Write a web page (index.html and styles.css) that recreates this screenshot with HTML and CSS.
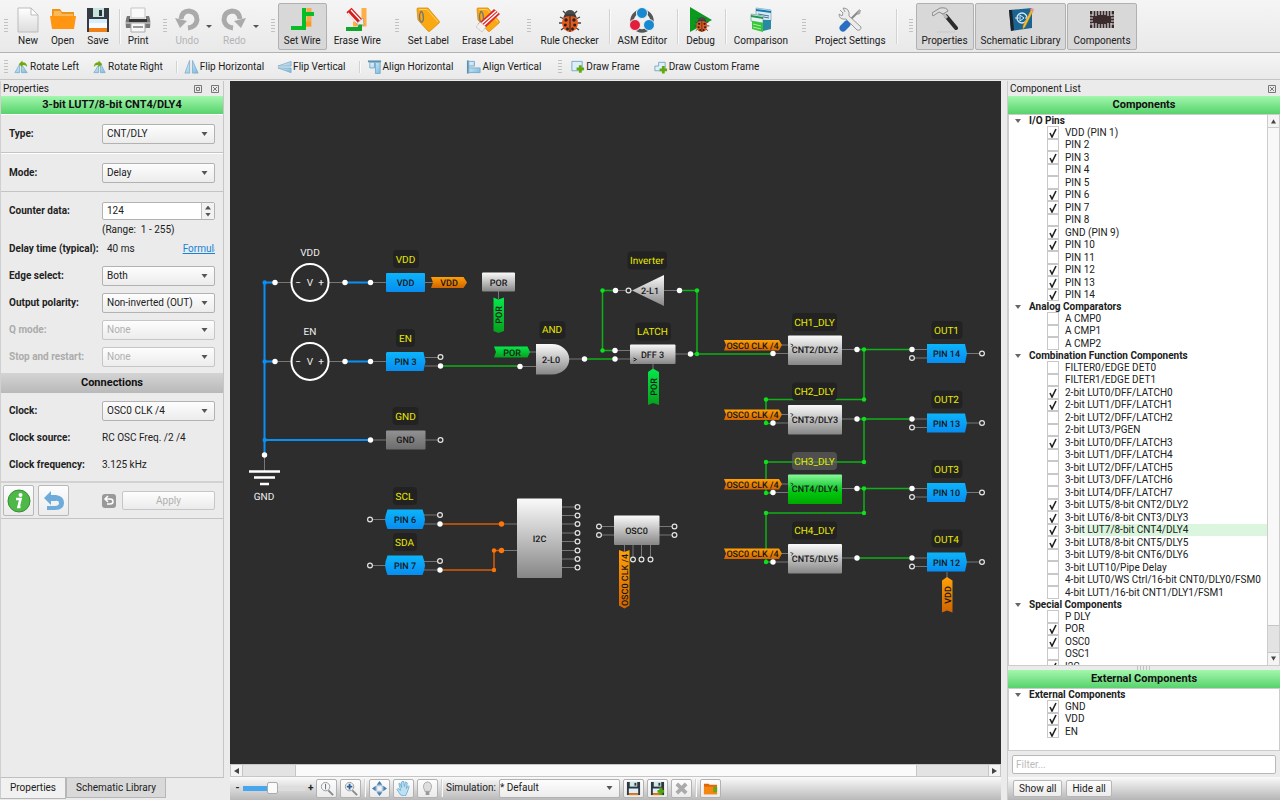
FILE: index.html
```html
<!DOCTYPE html>
<html lang="en">
<head>
<meta charset="utf-8">
<title>Schematic Designer</title>
<link rel="stylesheet" href="styles.css">
</head>
<body>
<svg class="defs" aria-hidden="true">
  <defs>
    <linearGradient id="blue" x1="0" y1="0" x2="0" y2="1"><stop offset="0" stop-color="#0cb4fa"/><stop offset="1" stop-color="#078df0"/></linearGradient>
    <linearGradient id="silver" x1="0" y1="0" x2="0" y2="1"><stop offset="0" stop-color="#fafafa"/><stop offset="1" stop-color="#868686"/></linearGradient>
    <linearGradient id="grey" x1="0" y1="0" x2="0" y2="1"><stop offset="0" stop-color="#929294"/><stop offset="1" stop-color="#6c6c6c"/></linearGradient>
    <linearGradient id="active" x1="0" y1="0" x2="0" y2="1"><stop offset="0" stop-color="#8cf79a"/><stop offset=".35" stop-color="#2fd54a"/><stop offset=".6" stop-color="#00c60e"/><stop offset="1" stop-color="#00a800"/></linearGradient>
    <linearGradient id="orange" x1="0" y1="0" x2="0" y2="1"><stop offset="0" stop-color="#ffa008"/><stop offset="1" stop-color="#cf6400"/></linearGradient>
    <linearGradient id="green" x1="0" y1="0" x2="0" y2="1"><stop offset="0" stop-color="#05e84c"/><stop offset="1" stop-color="#06a01c"/></linearGradient>
    <linearGradient id="paper" x1="0" y1="0" x2="0" y2="1"><stop offset="0" stop-color="#fff"/><stop offset="1" stop-color="#dcdcdc"/></linearGradient>
    <linearGradient id="sky" x1="0" y1="0" x2="1" y2="1"><stop offset="0" stop-color="#e4f4fc"/><stop offset="1" stop-color="#7dbce0"/></linearGradient>
    <g id="bug">
      <path d="M6 4l3 3M20 4l-3 3M3 10l4 2M23 10l-4 2M2 16h4M24 16h-4M4 23l4-3M22 23l-4-3" stroke="#444" stroke-width="1.3" fill="none"/>
      <path d="M8 7a5 4 0 0 1 10 0l1 3H7z" fill="#4a4a4a"/>
      <ellipse cx="13" cy="16" rx="8" ry="9" fill="#e8581c"/>
      <path d="M6 11q7-4 14 0l-2-4H8z" fill="#3c3c3c"/>
      <path d="M13 9v16" stroke="#333" stroke-width="1.2"/>
      <g fill="#222"><circle cx="9" cy="13" r="1.7"/><circle cx="17" cy="13" r="1.7"/><circle cx="8.300" cy="18" r="1.500"/><circle cx="17.700" cy="18" r="1.500"/><circle cx="10.500" cy="22" r="1.400"/><circle cx="15.500" cy="22" r="1.400"/></g>
    </g>
    <g id="tag">
      <path d="M2 2q0-1 1-1h10l11 13q1 1 0 2l-9 8q-1 1-2 0L3 13z" fill="#fba912" stroke="#d98a0c" stroke-width=".8"/>
      <path d="M4 2.500h8l11 12.500" stroke="#ffd25e" fill="none"/>
      <path d="M6 4c-3 5-1 12 1 11s2-9-1-11" fill="none" stroke="#777" stroke-width="1.400"/>
    </g>
    <g id="eraser"><path d="M19 2l6 5L9 22l-6-5z" fill="#e12a2a"/><path d="M21 4L5 18M23 5.500L7 20" stroke="#fff" stroke-width="1.400"/><path d="M5 15l6 5-4 5-6-5z" fill="#f3efee" stroke="#bbb" stroke-width=".6"/></g>
    <g id="lens"><circle cx="7" cy="6" r="4.500" fill="#f3f7fb" stroke="#999" stroke-width="1"/><path d="M10 10l5 5" stroke="#888" stroke-width="2"/></g>
    <g id="disk"><path d="M1 1h14v14H1z" fill="#2e3640"/><path d="M4 1h8v5H4z" fill="#cdeae8"/><path d="M9 2h2v3H9z" fill="#30363c"/><path d="M3 8h10v5H3z" fill="#dceefb"/><path d="M3 13h10v2H3z" fill="#ef7b10"/></g>
  </defs>
</svg>

<header>
  <nav class="toolbar main" aria-label="Main">
    <i class="grip first"></i>
    <button><svg viewBox="0 0 26 26"><path d="M3 1h13l7 7v17H3z" fill="url(#paper)" stroke="#bbb"/><path d="M16 1v7h7z" fill="#fff" stroke="#bbb"/></svg>New</button>
    <button><svg viewBox="0 0 26 26"><path d="M2 2h8l2 3h12v10H2z" fill="#f09418"/><path d="M4 4h6l2 3h11v7H3z" fill="#fbb95c"/><path d="M0 9h26l-2 13H2z" fill="#ff9510"/></svg>Open</button>
    <button><svg viewBox="0 0 26 26"><path d="M2 1h22v24H2z" fill="#343b43"/><path d="M8 1h11v9H8z" fill="#c7e3e0"/><path d="M14 3h3v6h-3z" fill="#2c3439"/><path d="M4 12h18v9H4z" fill="#d7eefd"/><path d="M4 16h18v5H4z" fill="#f7fbff"/><path d="M4 21h18v4H4z" fill="#f08016"/></svg>Save</button>
    <i class="sep"></i>
    <button><svg viewBox="0 0 26 26"><path d="M6 1h14v10H6z" fill="#fafafa" stroke="#c5c5c5"/><path d="M2 9h3v3h16V9h3q2 4 1 12H1Q0 13 2 9z" fill="#777"/><path d="M4 12h18v3H4z" fill="#353535"/><path d="M1 15h24v2H1z" fill="#aaa"/><path d="M6 16h14v9H6z" fill="#f7f7f7" stroke="#aaa"/><path d="M8 20h10" stroke="#999" stroke-width="2"/></svg>Print</button>
    <i class="grip"></i>
    <button disabled><svg viewBox="0 0 26 26"><path d="M7 12q1-8 8-8 8 1 8 9-1 7-9 8" fill="none" stroke="#aaa" stroke-width="5"/><path d="M1 11l12 3-7 7z" fill="#aaa"/></svg>Undo</button><i class="caret"></i>
    <button disabled><svg viewBox="0 0 26 26"><path d="M19 12q-1-8-8-8-8 1-8 9 1 7 9 8" fill="none" stroke="#aaa" stroke-width="5"/><path d="M25 11l-12 3 7 7z" fill="#aaa"/></svg>Redo</button><i class="caret"></i>
    <i class="grip"></i>
    <button class="on"><svg viewBox="0 0 26 26"><path d="M20 1v16h-7" fill="none" stroke="#f9a94a" stroke-width="5"/><path d="M13 17h9" stroke="#ff9820" stroke-width="5"/><path d="M15 1v20H2M15 7h10" fill="none" stroke="#08bd28" stroke-width="4"/></svg>Set Wire</button>
    <button><svg viewBox="0 0 26 26"><path d="M20 1v16H9" fill="none" stroke="#ffae48" stroke-width="5"/><path d="M16 17v5H2" fill="none" stroke="#10a52c" stroke-width="4"/><path d="M5 3l11 12" stroke="#d91e1e" stroke-width="7"/><path d="M4 6l11 12M7 3l11 12" stroke="#fff" stroke-width="1.200"/><path d="M12 17l7-6 1 7z" fill="#eee" stroke="#888" stroke-width=".5"/></svg>Erase Wire</button>
    <i class="grip"></i>
    <button><svg viewBox="0 0 26 26"><use href="#tag"/></svg>Set Label</button>
    <button><svg viewBox="0 0 26 26"><use href="#tag"/><use href="#eraser"/></svg>Erase Label</button>
    <i class="grip"></i>
    <button><svg viewBox="0 0 26 26"><use href="#bug"/></svg>Rule Checker</button>
    <i class="sep"></i>
    <button><svg viewBox="0 0 26 26"><circle cx="13" cy="14" r="10" fill="none" stroke="#555" stroke-width="3.500"/><g stroke="#f3f3f3"><circle cx="13" cy="6" r="5.500" fill="#1689d1"/><circle cx="6" cy="18" r="5.500" fill="#e11e3c"/><circle cx="20" cy="18" r="5.500" fill="#1689d1"/></g></svg>ASM Editor</button>
    <i class="sep"></i>
    <button><svg viewBox="0 0 26 26"><path d="M3 0l22 13L3 25z" fill="#0b9a1e"/><use href="#bug" transform="translate(6 8) scale(.68)"/></svg>Debug</button>
    <i class="sep"></i>
    <button><svg viewBox="0 0 26 26"><path d="M8 1l15 2v11L8 12z" fill="#d6eaf6" stroke="#93b8cc"/><path d="M8 2l15 2v2L8 4z" fill="#1479aa"/><path d="M10 7l11 2M10 9l11 2" stroke="#487187"/><path d="M3 7l12 2v7L3 14z" fill="#e5f5ee" stroke="#8ba"/><path d="M3 8l12 2v2L3 10z" fill="#22935c"/><path d="M4 14l11 2v9L4 22z" fill="#37c53c"/><path d="M15 13h8v9l-8 2z" fill="#2789a4"/><path d="M5 17l8 2M5 20l8 2" stroke="#b1ef9f"/></svg>Comparison</button>
    <i class="grip"></i>
    <button><svg viewBox="0 0 26 26"><path d="M23 3L9 17" stroke="#888" stroke-width="2"/><path d="M21 3l3 0-1 4-3 1z" fill="#aaa"/><path d="M10 17L6 21" stroke="#286fc2" stroke-width="7" stroke-linecap="round"/><path d="M3 3l3 3-1 3-3-2q0 6 7 5l11 11q4 1 4-3L12 9q1-8-6-8l2 4" fill="#ececec" stroke="#999"/></svg>Project Settings</button>
    <i class="sep"></i>
    <i class="grip far"></i>
    <button class="on"><svg viewBox="0 0 26 26"><path d="M14 9l10 12" stroke="#2c2c2c" stroke-width="4" stroke-linecap="round"/><path d="M9 4l6 7" stroke="#bbb" stroke-width="3"/><path d="M1 9L0 6 8 1q7-1 8 3l-5 3-4-2z" fill="#ddd" stroke="#777" stroke-width=".8"/><path d="M5 25h18" stroke="#c7c7c7"/></svg>Properties</button>
    <button class="on"><svg viewBox="0 0 26 26"><path d="M1 3l23-2v20L3 24z" fill="#1b6491"/><path d="M1 3l3 0 2 20-3 1z" fill="#1c2228"/><circle cx="14" cy="11" r="5" fill="none" stroke="#d4eaf6" stroke-width="1.300"/><path d="M7 11h4M17 11h4M12 8v6l4-3z" stroke="#d4eaf6" fill="none"/><path d="M23 3l2 1-8 16-2 2 0-3z" fill="#f6c02c" stroke="#c08810" stroke-width=".5"/><path d="M22 3l1-2 3 1-1 3z" fill="#f18f96"/></svg>Schematic Library</button>
    <button class="on"><svg viewBox="0 0 26 26"><path d="M1 4h24v17H1z" fill="#3b2b2c"/><path d="M4 4v5M7 4v5M10 4v4M13 4v4M16 4v4M19 4v5M22 4v5M4 16v5M7 16v5M10 17v4M13 17v4M16 17v4M19 16v5M22 16v5M1 8h3M1 11h3M1 14h3M1 17h3M22 8h3M22 11h3M22 14h3M22 17h3" stroke="#ddd" stroke-width="1.200"/></svg>Components</button>
  </nav>
  <nav class="toolbar edit" aria-label="Edit">
    <i class="grip first"></i>
    <button><svg viewBox="0 0 16 14"><path d="M1 13l5-9v9zM8 4l6 9H8z" fill="url(#sky)" stroke="#78aac8" stroke-width=".8"/><path d="M5 4l4-4v2q5 0 5 5Q12 4 9 5v2z" fill="#72a80e"/></svg>Rotate Left</button>
    <button><svg viewBox="0 0 16 14"><path d="M2 13l5-8v8zM9 3l5 10H9z" fill="url(#sky)" stroke="#78aac8" stroke-width=".8"/><path d="M11 4L7 0v2Q2 2 2 7q2-3 5-2v2z" fill="#72a80e"/></svg>Rotate Right</button>
    <i class="sep"></i>
    <button><svg viewBox="0 0 16 14"><path d="M1 13.500L6 0v13.500zM9 0l6 13.500H9z" fill="url(#sky)" stroke="#78aac8" stroke-width=".8"/></svg>Flip Horizontal</button>
    <button><svg viewBox="0 0 16 14"><path d="M15 1v5H1zM1 8h14v5z" fill="url(#sky)" stroke="#78aac8" stroke-width=".8"/></svg>Flip Vertical</button>
    <i class="sep"></i>
    <button><svg viewBox="0 0 16 14"><path d="M1 1h14" stroke="#5890b0" stroke-width="2"/><path d="M3 2h5v6H3zM9 2h5v12H9z" fill="url(#sky)" stroke="#78aac8"/></svg>Align Horizontal</button>
    <button><svg viewBox="0 0 16 14"><path d="M2 0v14" stroke="#5890b0" stroke-width="2"/><path d="M3 1h6v5H3zM3 8h12v5H3z" fill="url(#sky)" stroke="#78aac8"/></svg>Align Vertical</button>
    <i class="grip"></i>
    <button><svg viewBox="0 0 16 14"><path d="M2 1h11v10H2z" fill="#ddeffa" stroke="#78aac8"/><path d="M7 9h8M11 5v8" stroke="#64a810" stroke-width="3"/></svg>Draw Frame</button>
    <button><svg viewBox="0 0 16 14"><path d="M6 2h7v9H2V6h4z" fill="#ddeffa" stroke="#78aac8"/><path d="M7 10h8M11 6v8" stroke="#64a810" stroke-width="3"/></svg>Draw Custom Frame</button>
  </nav>
</header>

<main>
  <aside class="left">
    <div class="dock">
      <div class="docktitle"><span>Properties</span><button aria-label="Float"><svg viewBox="0 0 8 8"><path d="M.5.5h7v7h-7zM2.500 2.500h3v3h-3z"/></svg></button><button aria-label="Close"><svg viewBox="0 0 8 8"><path d="M.5.5h7v7h-7zM2 2l4 4M6 2l-4 4"/></svg></button></div>
      <h2 class="band">3-bit LUT7/8-bit CNT4/DLY4</h2>
      <div class="fields solo"><label for="type">Type:</label><select id="type"><option>CNT/DLY</option></select></div>
      <div class="fields solo"><label for="mode">Mode:</label><select id="mode"><option>Delay</option></select></div>
      <div class="fields counter">
        <label for="count">Counter data:</label>
        <div class="spin"><input id="count" type="text" value="124"><div><button aria-label="Increase" class="up"></button><button aria-label="Decrease" class="down"></button></div></div>
        <span class="range">(Range:&nbsp; 1 - 255)</span>
        <b>Delay time (typical):</b><div class="time"><span>40 ms</span><a href="#formula">Formula</a></div>
        <label for="edge">Edge select:</label><select id="edge"><option>Both</option></select>
        <label for="polarity">Output polarity:</label><select id="polarity"><option>Non-inverted (OUT)</option></select>
        <label for="qmode" class="off">Q mode:</label><select id="qmode" disabled><option>None</option></select>
        <label for="stop" class="off">Stop and restart:</label><select id="stop" disabled><option>None</option></select>
      </div>
      <h2 class="band plain">Connections</h2>
      <div class="fields links">
        <label for="clock">Clock:</label><select id="clock"><option>OSC0 CLK /4</option></select>
        <b>Clock source:</b><span>RC OSC Freq. /2 /4</span>
        <b>Clock frequency:</b><span>3.125 kHz</span>
      </div>
      <div class="actions">
        <button class="big" aria-label="Information"><svg viewBox="0 0 24 24"><circle cx="12" cy="12" r="11" fill="#4eb848" stroke="#378d35"/><circle cx="13.500" cy="6" r="2" fill="#fff"/><path d="M9 10h4.500l-2 8h2" fill="none" stroke="#fff" stroke-width="2.600"/></svg></button>
        <button class="big" aria-label="Undo change"><svg viewBox="0 0 24 24"><path d="M2 9l7-7v4h5q8 1 8 8t-9 7H5v-4h8q4 0 4-3t-4-2H9v4z" fill="#6cabda"/></svg></button>
        <button class="mini" aria-label="Reset" disabled><svg viewBox="0 0 14 14"><path d="M3 5h5q3 0 3 2.500T8 10H5M6 2L3 5l3 3" fill="none" stroke="#fff" stroke-width="1.500"/></svg></button>
        <button class="apply" disabled>Apply</button>
      </div>
    </div>
    <div class="tabs"><button class="current">Properties</button><button>Schematic Library</button></div>
  </aside>

  <section class="center">
    <div class="canvas">
    <svg viewBox="230 81 771 683" role="img" aria-label="Schematic">
      <g class="stub">
        <path d="M275 282.500h16M329 282.500h16M370 282.500h16M425 282.500h8M275 361.500h16M329 361.500h16M370 361.500h16M425 357.500h15M425 366h15M370 440h16M425 440h15M264.500 455v16M498.500 291v8M529 352h8M520 366.500h16M569 359h16M628 290.500h4M615 290.500h12M664 290.500h16M615 350.500h15M615 359h15M675 354h16M653 364v8"/>
        <path d="M370 519.500h16M424 515h16M424 524h16M370 565.500h16M424 561.500h16M424 570h16M502 524h15M502 550.500h15M562 507h15M562 515.500h15M562 524h15M562 533h15M562 541.500h15M562 550.500h15M562 559h15M562 567.500h15M599 526.500h75M599 535h75M624.500 545v8M633 545v14M641.500 545v14M650.500 545v14M947 572v8"/>
      </g>
      <g class="wire bl"><path d="M265 282.500h10M345 282.500h25M265 361.500h10M345 361.500h25M265 440h105M264.500 282v173"/></g>
      <g class="wire gr"><path d="M440 366h80M584 359h31M615 290.500h-12.500v60h12.500M680 290.500h17v63.500M691 354h82"/></g>
      <g class="wire gr"><path d="M857 349.500h55M864 349.500v50H766v24h7M857 419h55M864 419v43H766v31h7M857 488.500h55M864 488.500v24.500H766v49h7M857 558h55"/></g>
      <g class="wire or"><path d="M440 524h62M440 570h54v-19.500h8"/></g>

      <g class="src"><circle cx="310" cy="282.500" r="18.500"/><circle cx="310" cy="361.500" r="18.500"/></g>
      <path d="M249 471.500h31M254 477.500h21M260 484h9" stroke="#fff" stroke-width="2.500"/>
      <g class="t light"><text x="310" y="256">VDD</text><text x="310" y="335">EN</text><text x="264" y="500">GND</text><text x="310" y="286">V</text><text x="298" y="286">−</text><text x="321" y="286">+</text><text x="310" y="365">V</text><text x="298" y="365">−</text><text x="321" y="365">+</text></g>

      <g fill="url(#blue)"><rect x="386" y="273" width="39" height="19" rx="1"/><path d="M387 352h36.500l2 9.500-2 9.500H386v-18z"/><path d="M387.500 509.500H422.500q2 5 2.500 10-.5 5-2.500 9.500H387.500q-2-5-2.500-9.500.5-5 2.500-10z"/><path d="M387.500 555.500H422.500q2 5 2.500 10-.5 5-2.500 9.500H387.500q-2-5-2.500-9.500.5-5 2.500-10z"/></g>
      <rect x="386" y="430.500" width="39.500" height="19" rx="1" fill="url(#grey)"/>
      <g fill="url(#silver)"><rect x="482" y="272.500" width="33" height="19" rx="1"/><path d="M536 344h16a17 15 0 0 1 0 30.500H536z"/><path d="M664 275v31l-32-15.500z"/><rect x="630" y="344.500" width="45.500" height="19.500" rx="1"/><rect x="517" y="498.500" width="45" height="79.500" rx="1"/><rect x="614" y="515.500" width="45.500" height="29.500" rx="1"/></g>
      <g fill="url(#orange)"><path d="M431 277h32.500l3.500 5.500-3.500 5.500H431l2-5.500z"/><path d="M619 550l5.500 2 5-2v55.500l-5 3-5.500-3z"/><path d="M942 612.500V580.500l5-3.500 5.500 3.500v32l-5.500-2z"/></g>
      <g fill="url(#green)"><path d="M493.500 297.500l5 2 5.500-2V331l-5.500 2-5-2z"/><path d="M494 346.500h33.500l2.500 5.500-2.500 5.500H494l2-5.500z"/><path d="M648 405v-33l5-3.500 6 3.500v33l-6-2z"/></g>

      <g class="tag"><rect x="393" y="250" width="26" height="18" rx="4"/><rect x="396" y="329" width="19" height="18" rx="4"/><rect x="392.500" y="407" width="26" height="18" rx="4"/><rect x="393" y="487" width="24" height="18" rx="4"/><rect x="393" y="533" width="24" height="18" rx="4"/><rect x="539.500" y="321" width="26" height="18" rx="4"/><rect x="627.500" y="251.500" width="39.500" height="18" rx="4"/><rect x="635" y="322.500" width="36" height="18" rx="4"/></g>
      <g class="t name"><text x="405.500" y="262.500">VDD</text><text x="405.500" y="341.500">EN</text><text x="405.500" y="419.500">GND</text><text x="404.500" y="499.500">SCL</text><text x="404.500" y="545.500">SDA</text><text x="552" y="333">AND</text><text x="647" y="264">Inverter</text><text x="652.500" y="335">LATCH</text></g>

      <g class="t part"><text x="405.500" y="285.500">VDD</text><text x="449" y="286">VDD</text><text x="405.500" y="364.500">PIN 3</text><text x="405.500" y="443">GND</text><text x="498.500" y="285.500">POR</text><text x="512" y="355.500">POR</text><text x="551" y="362.500">2-L0</text><text x="650" y="294">2-L1</text><text x="652.500" y="357.500">DFF 3</text><text x="405" y="522.500">PIN 6</text><text x="405" y="568.500">PIN 7</text><text x="539.500" y="541.500">I2C</text><text x="636.500" y="534">OSC0</text>
        <text transform="translate(502 315) rotate(-90)">POR</text><text transform="translate(656.500 387) rotate(-90)">POR</text><text transform="translate(628 580) rotate(-90)">OSC0 CLK /4</text><text transform="translate(950.500 595) rotate(-90)">VDD</text></g>
      <path d="M633.500 358l3 1.500-3 1.500" fill="none" stroke="#222"/>

      <defs>
        <g id="delay"><path class="stub" d="M781 345h7M773 353.500h15M842 349.500h15"/><rect x="788" y="335.500" width="54" height="29.500" rx="1"/><path d="M790.500 344l2.500 1-1.500 2" fill="none" stroke="#222" stroke-width=".8"/><path d="M724 340h55l3 5-3 5.500h-55l2-5.500z" fill="url(#orange)"/><circle class="dot" cx="773" cy="353.500" r="2.700"/><circle class="dot" cx="857" cy="349.500" r="2.700"/></g>
        <g id="outpin"><path class="stub" d="M912 349.500h15M912 358h15M966 353.500h16"/><path d="M927 344h38l2 9.500-2 9.500h-38z" fill="url(#blue)"/><rect class="lab" x="931.500" y="321" width="31" height="18" rx="4"/><circle class="dot" cx="912" cy="349.500" r="2.700"/><circle class="ring" cx="912" cy="358" r="2.400"/><circle class="ring" cx="982" cy="353.500" r="2.400"/></g>
      </defs>
      <g fill="url(#silver)"><use href="#delay"/><use href="#delay" y="69.500"/><use href="#delay" y="139" fill="url(#active)"/><use href="#delay" y="208.500"/></g>
      <use href="#outpin"/><use href="#outpin" y="69.500"/><use href="#outpin" y="139"/><use href="#outpin" y="208.500"/>
      <g class="tag"><rect x="792" y="313" width="45" height="18" rx="4"/><rect x="792" y="382.500" width="45" height="18" rx="4"/><rect x="792" y="452" width="45" height="18" rx="4" class="sel"/><rect x="792" y="521.500" width="45" height="18" rx="4"/></g>
      <g class="t name"><text x="814.500" y="325.500">CH1_DLY</text><text x="814.500" y="395">CH2_DLY</text><text x="814.500" y="464.500">CH3_DLY</text><text x="814.500" y="534">CH4_DLY</text><text x="946.500" y="333.500">OUT1</text><text x="946.500" y="403">OUT2</text><text x="946.500" y="473">OUT3</text><text x="946.500" y="542.500">OUT4</text></g>
      <g class="t part"><text x="815" y="353">CNT2/DLY2</text><text x="815" y="422.500">CNT3/DLY3</text><text x="815" y="492">CNT4/DLY4</text><text x="815" y="561.500">CNT5/DLY5</text><text x="752.500" y="348.500">OSC0 CLK /4</text><text x="752.500" y="418">OSC0 CLK /4</text><text x="752.500" y="487.500">OSC0 CLK /4</text><text x="752.500" y="557">OSC0 CLK /4</text><text x="946.500" y="357">PIN 14</text><text x="946.500" y="426.500">PIN 13</text><text x="946.500" y="496">PIN 10</text><text x="946.500" y="565.500">PIN 12</text></g>

      <g fill="#0a8ff5"><circle cx="264.700" cy="282.500" r="2.200"/><circle cx="264.700" cy="361.500" r="2.200"/><circle cx="264.700" cy="440" r="2.200"/></g>
      <g fill="#0fe01b"><circle cx="602.500" cy="290.500" r="2.200"/><circle cx="602.500" cy="350.500" r="2.200"/><circle cx="697" cy="290.500" r="2.200"/><circle cx="697" cy="354" r="2.200"/><circle cx="864" cy="349.500" r="2.200"/><circle cx="864" cy="399.500" r="2.200"/><circle cx="766" cy="399.500" r="2.200"/><circle cx="766" cy="423" r="2.200"/><circle cx="864" cy="419" r="2.200"/><circle cx="864" cy="462" r="2.200"/><circle cx="766" cy="462" r="2.200"/><circle cx="766" cy="493" r="2.200"/><circle cx="864" cy="488.500" r="2.200"/><circle cx="864" cy="513" r="2.200"/><circle cx="766" cy="513" r="2.200"/><circle cx="766" cy="562" r="2.200"/></g>
      <g fill="#ff7508"><circle cx="501.500" cy="524" r="2.700"/><circle cx="501.500" cy="550.500" r="2.700"/><circle cx="494" cy="550.500" r="2.200"/><circle cx="494" cy="570" r="2.200"/></g>
      <g fill="#fff"><circle cx="275" cy="282.500" r="2.700"/><circle cx="345" cy="282.500" r="2.700"/><circle cx="370.500" cy="282.500" r="2.700"/><circle cx="275" cy="361.500" r="2.700"/><circle cx="345" cy="361.500" r="2.700"/><circle cx="370.500" cy="361.500" r="2.700"/><circle cx="370.500" cy="440" r="2.700"/><circle cx="264.500" cy="455" r="2.700"/><circle cx="440.500" cy="366" r="2.700"/><circle cx="520" cy="366.500" r="2.700"/><circle cx="584.500" cy="359" r="2.700"/><circle cx="615" cy="359" r="2.700"/><circle cx="615" cy="350.500" r="2.700"/><circle cx="615.500" cy="290.500" r="2.700"/><circle cx="679.500" cy="290.500" r="2.700"/><circle cx="690.500" cy="354" r="2.700"/><circle cx="440" cy="524" r="2.700"/><circle cx="440" cy="570" r="2.700"/></g>
      <g class="ring"><circle cx="440.500" cy="357" r="2.400"/><circle cx="440.500" cy="440" r="2.400"/><circle cx="628.500" cy="290.500" r="2.400"/><circle cx="370" cy="519.500" r="2.400"/><circle cx="370" cy="565.500" r="2.400"/><circle cx="440" cy="515" r="2.400"/><circle cx="440" cy="561" r="2.400"/><circle cx="577.500" cy="507" r="2.400"/><circle cx="577.500" cy="515.500" r="2.400"/><circle cx="577.500" cy="524" r="2.400"/><circle cx="577.500" cy="533" r="2.400"/><circle cx="577.500" cy="541.500" r="2.400"/><circle cx="577.500" cy="550.500" r="2.400"/><circle cx="577.500" cy="559" r="2.400"/><circle cx="577.500" cy="567.500" r="2.400"/><circle cx="599" cy="526.500" r="2.400"/><circle cx="599" cy="535" r="2.400"/><circle cx="674.500" cy="526.500" r="2.400"/><circle cx="674.500" cy="535" r="2.400"/><circle cx="633" cy="559.500" r="2.400"/><circle cx="641.500" cy="559.500" r="2.400"/><circle cx="650.500" cy="559.500" r="2.400"/></g>
    </svg>
    </div>
    <div class="hscroll"><i class="arrow prev"></i><i class="track"></i><i class="thumb"></i><i class="track tail"></i><i class="arrow next"></i></div>
    <div class="status">
      <button class="step" aria-label="Zoom out">-</button>
      <input type="range" aria-label="Zoom" min="0" max="100" value="48">
      <button class="step" aria-label="Zoom in">+</button>
      <button class="tool" aria-label="Actual size"><svg viewBox="0 0 16 16"><use href="#lens"/><path d="M7 3v6" stroke="#666"/></svg></button>
      <button class="tool" aria-label="Zoom area"><svg viewBox="0 0 16 16"><use href="#lens"/><path d="M4 6h6M7 3v6" stroke="#2c5f9b" stroke-width="2"/></svg></button>
      <i class="sep"></i>
      <button class="tool" aria-label="Fit"><svg viewBox="0 0 16 16"><path d="M8 0l3 4H5zM8 16l3-4H5zM0 8l4-3v6zM16 8l-4-3v6z" fill="#477daf"/><path d="M5 5h6v6H5z" fill="#eef4fa" stroke="#9ab3c9"/></svg></button>
      <button class="tool" aria-label="Pan"><svg viewBox="0 0 16 16"><path d="M5 15L1 9l1-1 3 2L3 3l1-1 2 5V1l2-1 1 6 1-5 2 1-1 6 2-3 1 1-2 6-2 4z" fill="#bfe0f3" stroke="#5aa5cc" stroke-width=".8"/></svg></button>
      <button class="tool" aria-label="Highlight"><svg viewBox="0 0 16 16"><path d="M5 10Q3 7 4 4t4-3 4 3-1 6v1H5z" fill="#dedede" stroke="#aaa"/><path d="M6 11h4v4H6z" fill="#999"/></svg></button>
      <i class="sep"></i>
      <label for="sim">Simulation:</label>
      <select id="sim"><option>* Default</option></select>
      <button class="tool" aria-label="Save"><svg viewBox="0 0 16 16"><use href="#disk"/></svg></button>
      <button class="tool" aria-label="Save as"><svg viewBox="0 0 16 16"><use href="#disk"/><path d="M8 11h7M11.500 7v8" stroke="#53a30c" stroke-width="3"/></svg></button>
      <button class="tool" aria-label="Delete"><svg viewBox="0 0 16 16"><path d="M3 3l10 10M13 3L3 13" stroke="#aaa" stroke-width="4"/></svg></button>
      <i class="sep"></i>
      <button class="tool" aria-label="Open folder"><svg viewBox="0 0 16 16"><path d="M1 3h5l1 1h8v10H1z" fill="#dd6708"/><path d="M1 6h14v8H1z" fill="#f48612"/><path d="M11 6h4v6h-4z" fill="#65a51b"/></svg></button>
    </div>
  </section>

  <aside class="right">
    <div class="docktitle"><span>Component List</span><button aria-label="Close"><svg viewBox="0 0 8 8"><path d="M.5.5h7v7h-7zM2 2l4 4M6 2l-4 4"/></svg></button></div>
    <h2 class="band">Components</h2>
    <div class="listbox">
      <div class="tree">
        <h3>I/O Pins</h3>
        <ul>
          <li><label><input type="checkbox" checked>VDD (PIN 1)</label></li>
          <li><label><input type="checkbox">PIN 2</label></li>
          <li><label><input type="checkbox" checked>PIN 3</label></li>
          <li><label><input type="checkbox">PIN 4</label></li>
          <li><label><input type="checkbox">PIN 5</label></li>
          <li><label><input type="checkbox" checked>PIN 6</label></li>
          <li><label><input type="checkbox" checked>PIN 7</label></li>
          <li><label><input type="checkbox">PIN 8</label></li>
          <li><label><input type="checkbox" checked>GND (PIN 9)</label></li>
          <li><label><input type="checkbox" checked>PIN 10</label></li>
          <li><label><input type="checkbox">PIN 11</label></li>
          <li><label><input type="checkbox" checked>PIN 12</label></li>
          <li><label><input type="checkbox" checked>PIN 13</label></li>
          <li><label><input type="checkbox" checked>PIN 14</label></li>
        </ul>
        <h3>Analog Comparators</h3>
        <ul>
          <li><label><input type="checkbox">A CMP0</label></li>
          <li><label><input type="checkbox">A CMP1</label></li>
          <li><label><input type="checkbox">A CMP2</label></li>
        </ul>
        <h3>Combination Function Components</h3>
        <ul>
          <li><label><input type="checkbox">FILTER0/EDGE DET0</label></li>
          <li><label><input type="checkbox">FILTER1/EDGE DET1</label></li>
          <li><label><input type="checkbox" checked>2-bit LUT0/DFF/LATCH0</label></li>
          <li><label><input type="checkbox" checked>2-bit LUT1/DFF/LATCH1</label></li>
          <li><label><input type="checkbox">2-bit LUT2/DFF/LATCH2</label></li>
          <li><label><input type="checkbox">2-bit LUT3/PGEN</label></li>
          <li><label><input type="checkbox" checked>3-bit LUT0/DFF/LATCH3</label></li>
          <li><label><input type="checkbox">3-bit LUT1/DFF/LATCH4</label></li>
          <li><label><input type="checkbox">3-bit LUT2/DFF/LATCH5</label></li>
          <li><label><input type="checkbox">3-bit LUT3/DFF/LATCH6</label></li>
          <li><label><input type="checkbox">3-bit LUT4/DFF/LATCH7</label></li>
          <li><label><input type="checkbox" checked>3-bit LUT5/8-bit CNT2/DLY2</label></li>
          <li><label><input type="checkbox" checked>3-bit LUT6/8-bit CNT3/DLY3</label></li>
          <li class="picked"><label><input type="checkbox" checked>3-bit LUT7/8-bit CNT4/DLY4</label></li>
          <li><label><input type="checkbox" checked>3-bit LUT8/8-bit CNT5/DLY5</label></li>
          <li><label><input type="checkbox">3-bit LUT9/8-bit CNT6/DLY6</label></li>
          <li><label><input type="checkbox">3-bit LUT10/Pipe Delay</label></li>
          <li><label><input type="checkbox">4-bit LUT0/WS Ctrl/16-bit CNT0/DLY0/FSM0</label></li>
          <li><label><input type="checkbox">4-bit LUT1/16-bit CNT1/DLY1/FSM1</label></li>
        </ul>
        <h3>Special Components</h3>
        <ul>
          <li><label><input type="checkbox">P DLY</label></li>
          <li><label><input type="checkbox" checked>POR</label></li>
          <li><label><input type="checkbox" checked>OSC0</label></li>
          <li><label><input type="checkbox">OSC1</label></li>
          <li><label><input type="checkbox" checked>I2C</label></li>
        </ul>
      </div>
      <div class="vscroll"><i class="arrow top"></i><i class="track"></i><i class="thumb"></i><i class="arrow bottom"></i></div>
    </div>
    <i class="splitter"></i>
    <h2 class="band">External Components</h2>
    <div class="listbox short">
      <div class="tree">
        <h3>External Components</h3>
        <ul>
          <li><label><input type="checkbox" checked>GND</label></li>
          <li><label><input type="checkbox" checked>VDD</label></li>
          <li><label><input type="checkbox" checked>EN</label></li>
        </ul>
      </div>
    </div>
    <div class="filter"><input type="text" placeholder="Filter..." aria-label="Filter components"></div>
    <div class="show"><button>Show all</button><button>Hide all</button></div>
  </aside>
</main>
</body>
</html>
```

FILE: styles.css
```css
* { box-sizing: border-box; }
html, body { height: 100%; }
body { margin: 0; display: flex; flex-direction: column; overflow: hidden; background: #ebebeb; color: #202020; font: 10px/12px Roboto, "Noto Sans", sans-serif; }
button, input, select { font: inherit; color: inherit; margin: 0; }
h2, h3, ul { margin: 0; padding: 0; list-style: none; font-size: 10px; }
.defs { position: absolute; width: 0; height: 0; }

/* Toolbars */
.toolbar { display: flex; align-items: center; padding-left: 3px; background: linear-gradient(#f5f5f5, #e9e9e9); }
.toolbar button { border: 1px solid transparent; border-radius: 2px; background: none; white-space: nowrap; }
.main { height: 53px; gap: 1px; border-bottom: 1px solid #b2b2b2; }
.main button { display: flex; flex-direction: column; align-items: center; gap: 2px; height: 47px; padding: 3px 5px 0; }
.main svg { width: 26px; height: 26px; display: block; margin: 0 -4px; }
.main button:disabled { color: #b4b4b4; }
.main .on { background: #d8d8d8; border-color: #b1b1b1; }
.edit { height: 27px; padding-top: 2px; border-bottom: 1px solid #c4c4c4; }
.edit button { display: flex; align-items: center; gap: 1px; height: 22px; padding: 0 5px; }
.edit button + button { margin-left: 1px; }
.edit svg { width: 15px; height: 14px; }
.grip { width: 4px; height: 16px; margin: 0 2px 0 7px; background: radial-gradient(circle, #bbb 25%, transparent 45%) 0 0 / 2px 3px; }
.grip.far { margin-left: 10px; }
.toolbar .first { margin: 0 3px 0 1px; }
.edit .first { margin-right: 0; }
.edit .grip { margin-left: 11px; }
.edit .grip.first { margin-left: 1px; }
.sep { width: 2px; height: 35px; margin: 0 0 0 3px; background: #d2d2d2; border-right: 1px solid #fafafa; }
.edit .sep { height: 12px; margin: 0 0 0 7px; }
.caret { border: 3px solid transparent; border-top-color: #555; border-bottom: 0; margin-right: 4px; }

/* Shell */
main { flex: 1; min-height: 0; display: flex; padding-top: 1px; }
.left { width: 224px; display: flex; flex-direction: column; margin-right: 6px; }
.center { flex: 1; min-width: 0; display: flex; flex-direction: column; }
.right { width: 273px; margin-left: 6px; display: flex; flex-direction: column; border-left: 1px solid #ccc; }
.dock { flex: 1; min-height: 0; overflow: hidden; border-right: 1px solid #c6c6c6; border-bottom: 1px solid #c0c0c0; border-left: 1px solid #d0d0d0; }
.docktitle { display: flex; align-items: center; gap: 9px; height: 15px; padding: 0 4px 0 2px; flex: none; }
.docktitle span { flex: 1; }
.docktitle button { border: 0; padding: 0; background: none; width: 8px; height: 8px; display: flex; }
.docktitle svg { width: 8px; height: 8px; fill: none; stroke: #777; stroke-width: 1; }
.band { height: 18px; flex: none; line-height: 18px; text-align: center; color: #111; font-size: 11px; font-weight: 700; background: linear-gradient(#a3f7ae, #57d36c); }
.band.plain { height: 20px; line-height: 20px; background: linear-gradient(#d4d4d4, #b9b9b9); }

/* Property form */
.fields { display: grid; grid-template-columns: 93px minmax(0, 1fr); grid-auto-rows: 20px; row-gap: 7px; align-items: center; padding: 9px 8px 7px; white-space: nowrap; }
.fields.solo { padding: 9px 8px; border-top: 1px solid #fff; border-bottom: 1px solid #c4c4c4; height: 39px; }
.fields.counter { grid-template-rows: 20px 6px 20px; grid-auto-rows: 21px; row-gap: 6px; padding-bottom: 6px; }
.fields label, .fields b { font-weight: 700; color: #222; }
.fields label.off { color: #ababab; }
.range { grid-column: 2; }
.links { padding-bottom: 6px; padding-top: 8px; }
.time { display: flex; gap: 48px; overflow: hidden; padding-left: 5px; }
.time a { color: #1583d8; }
select { appearance: none; height: 20px; width: 100%; min-width: 0; padding: 0 4px; border: 1px solid #b2b2b2; border-radius: 2px; background: url("data:image/svg+xml,%3Csvg xmlns='http://www.w3.org/2000/svg' viewBox='0 0 6 4'%3E%3Cpath d='M0 0h6L3 4z' fill='%23555'/%3E%3C/svg%3E") no-repeat right 6px center / 7px 4px, linear-gradient(#fdfdfd, #ececec); }
select:disabled { color: #b0b0b0; opacity: 1; border-color: #c6c6c6; }
.spin { display: flex; height: 18px; border: 1px solid #b2b2b2; border-radius: 2px; background: #fff; }
.spin input { flex: 1; min-width: 0; border: 0; padding: 0 4px; background: none; }
.spin div { width: 13px; display: flex; flex-direction: column; align-items: center; justify-content: center; gap: 3px; border-left: 1px solid #c0c0c0; background: #f2f2f2; }
.spin button { padding: 0; width: 6px; height: 4px; border: 0; background: #555; }
.spin .up { clip-path: polygon(50% 0, 100% 100%, 0 100%); }
.spin .down { clip-path: polygon(0 0, 100% 0, 50% 100%); }
.actions { display: flex; align-items: center; gap: 4px; height: 38px; padding: 0 8px 0 2px; border-top: 2px solid #d2d2d2; border-bottom: 1px solid #c4c4c4; }
.actions button { border: 1px solid #b8b8b8; border-radius: 2px; background: linear-gradient(#fdfdfd, #ebebeb); padding: 0; }
.actions .big { width: 31px; height: 31px; display: grid; place-items: center; }
.big svg { width: 24px; height: 24px; }
.actions .mini { width: 14px; height: 14px; margin-left: 29px; background: #999; border: 0; border-radius: 3px; }
.mini svg { display: block; }
.actions .apply { flex: 1; height: 19px; margin-left: 2px; color: #b0b0b0; border-color: #c6c6c6; }
.tabs { display: flex; align-items: flex-start; height: 22px; }
.tabs button { height: 20px; padding: 0 9px; border: 1px solid #b6b6b6; border-top: 0; background: #d9d9d9; }
.tabs .current { height: 21px; background: #f1f1f1; border-left-color: #ccc; }

/* Schematic */
.canvas { flex: 1; min-height: 0; background: #2d2d2d; }
.canvas svg { display: block; width: 100%; height: 100%; text-rendering: geometricPrecision; }
.stub, .stub path { stroke: #777; stroke-width: 1; fill: none; }
.wire { fill: none; stroke-width: 1.5; }
.bl { stroke: #0a8ff5; stroke-width: 2; }
.gr { stroke: #10b018; }
.or { stroke: #d65d08; }
.src { fill: none; stroke: #fff; stroke-width: 2; }
.t { text-anchor: middle; font-size: 10px; }
.light { fill: #f0f0f0; }
.name { fill: #e9e900; }
.part { fill: #161616; font-size: 9px; font-weight: 500; }
.tag, .lab { fill: #222; }
.sel { fill: #666; fill-opacity: .6; }
.dot { fill: #fff; }
.ring { fill: #2d2d2d; stroke: #e4e4e4; stroke-width: 1.2; }

/* Scroll bars */
.hscroll { display: flex; height: 13px; border: 1px solid #c6c6c6; background: #f8f8f8; }
.hscroll .track { flex: 0 0 54px; background: #e3e3e3; border-right: 1px solid #c6c6c6; border-left: 1px solid #c6c6c6; }
.hscroll .tail { flex-basis: 73px; }
.hscroll .thumb { flex: 1; background: #fafafa; }
.arrow { flex: 0 0 11px; background: #f4f4f4; }
.arrow::before { content: ""; display: block; width: 5px; height: 6px; margin: 3px auto; background: #444; clip-path: polygon(100% 0, 100% 100%, 0 50%); }
.next::before { clip-path: polygon(0 0, 100% 50%, 0 100%); }
.top::before { clip-path: polygon(50% 20%, 100% 90%, 0 90%); }
.bottom::before { clip-path: polygon(0 10%, 100% 10%, 50% 80%); }

/* Status bar */
.status { display: flex; align-items: center; gap: 3px; height: 23px; padding: 0 5px 1px; background: linear-gradient(#fafafa, #b9b9b9); }
.status .step { border: 0; background: none; padding: 0; width: 5px; font-weight: 700; }
.status input { appearance: none; width: 62px; height: 14px; background: linear-gradient(90deg, #46a6ee 48%, #ddd 48%) no-repeat center / 100% 5px; }
.status input::-webkit-slider-thumb { appearance: none; width: 11px; height: 12px; border: 1px solid #aaa; border-radius: 2px; background: #fafafa; }
.tool { width: 21px; height: 19px; padding: 0; display: grid; place-items: center; border: 1px solid #b2b2b2; border-radius: 2px; background: linear-gradient(#fdfdfd, #ebebeb); }
.tool svg { width: 15px; height: 15px; }
.status .sep { height: 18px; margin: 0; }
.status select { width: 121px; height: 19px; padding: 0; }

/* Component tree */
.listbox { flex: 1; min-height: 0; display: flex; background: #fff; border: 1px solid #ccc; overflow: hidden; }
.listbox.short { flex: 0 0 63px; }
.tree { flex: 1; min-width: 0; white-space: nowrap; }
.tree h3 { height: 11px; line-height: 11px; padding-left: 20px; font-weight: 700; display: flex; }
.tree h3::before { content: ""; width: 6px; height: 4px; margin: 4px 8px 0 -14px; background: #666; clip-path: polygon(0 0, 100% 0, 50% 100%); }
.tree li { height: 12px; line-height: 12px; padding-left: 38px; }
.tree li:nth-child(odd) { height: 13px; line-height: 13px; }
.tree label { display: flex; align-items: center; gap: 6px; }
.tree input { appearance: none; width: 12px; height: 13px; border: 1px solid #c8c8c8; background: #fff; flex: none; }
.tree li:nth-child(even) input { height: 12px; }
.tree input:checked { background: #fff url("data:image/svg+xml,%3Csvg xmlns='http://www.w3.org/2000/svg' viewBox='0 0 10 10'%3E%3Cpath d='M2 5l2 4 4-8' fill='none' stroke='%23222' stroke-width='1.600'/%3E%3C/svg%3E") center / 10px 10px no-repeat; }
.picked { background: linear-gradient(90deg, #fff 52px, #d9f6dc 90px, #dcf5df); }
.vscroll { width: 12px; display: flex; flex-direction: column; background: #f8f8f8; border-left: 1px solid #ccc; }
.vscroll .arrow { flex: 0 0 11px; }
.vscroll .track { flex: 1; border-top: 1px solid #ccc; }
.vscroll .thumb { flex: 0 0 28px; background: #e3e3e3; border: solid #c6c6c6; border-width: 1px 0; }
.splitter { flex: none; height: 4px; width: 16px; align-self: center; background: radial-gradient(circle, #bbb 25%, transparent 45%) 0 0 / 3px 2px; }
.filter { padding: 4px 4px 3px; }
.filter input { display: block; width: 100%; height: 19px; border: 1px solid #b8b8b8; border-radius: 2px; background: #fff; padding: 0 3px; }
.filter input::placeholder { color: #bbb; }
.show { display: flex; gap: 4px; align-items: center; padding: 0 5px; height: 23px; background: linear-gradient(#fafafa, #b5b5b5); }
.show button { height: 17px; padding: 0 5px; border: 1px solid #b6b6b6; border-radius: 2px; background: linear-gradient(#fdfdfd, #ebebeb); line-height: 12px; }
```
